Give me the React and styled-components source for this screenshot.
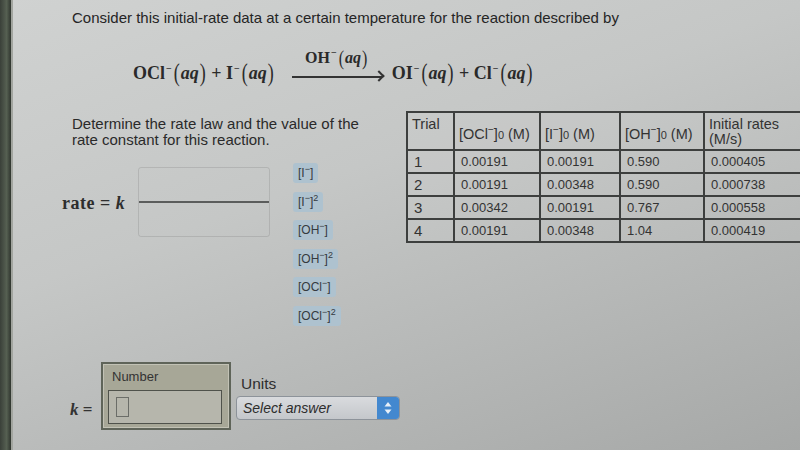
import styled, { createGlobalStyle } from "styled-components";

const GlobalStyle = createGlobalStyle`
  html, body {
    margin: 0;
    padding: 0;
    background: #b8bab9;
  }
  body {
    font-family: "Liberation Sans", Arial, sans-serif;
    color: #222;
  }
`;

const chips = [
  { base: "I", sq: false },
  { base: "I", sq: true },
  { base: "OH", sq: false },
  { base: "OH", sq: true },
  { base: "OCl", sq: false },
  { base: "OCl", sq: true },
];

const rows = [
  ["1", "0.00191", "0.00191", "0.590", "0.000405"],
  ["2", "0.00191", "0.00348", "0.590", "0.000738"],
  ["3", "0.00342", "0.00191", "0.767", "0.000558"],
  ["4", "0.00191", "0.00348", "1.04", "0.000419"],
];

function Aq() {
  return (
    <Aqueous>
      <Paren>(</Paren>aq<Paren>)</Paren>
    </Aqueous>
  );
}

function Species({ children }) {
  return (
    <>
      {children}
      <Minus>−</Minus>
      <Aq />
    </>
  );
}

export default function App() {
  return (
    <>
      <GlobalStyle />
      <Page>
        <Bezel />
        <Main>
          <Intro>
            Consider this initial-rate data at a certain temperature for the
            reaction described by
          </Intro>

          <Equation>
            <span>
              <Species>OCl</Species> + <Species>I</Species>
            </span>
            <Arrow>
              <Catalyst>
                <Species>OH</Species>
              </Catalyst>
              <ArrowLine />
            </Arrow>
            <span>
              <Species>OI</Species> + <Species>Cl</Species>
            </span>
          </Equation>

          <Middle>
            <LeftCol>
              <Prompt>
                Determine the rate law and the value of the
                <br />
                rate constant for this reaction.
              </Prompt>
              <RateArea>
                <RateLabel>
                  rate = <i>k</i>
                </RateLabel>
                <DropBox>
                  <DropLine />
                </DropBox>
                <ChipList>
                  {chips.map((c, i) => (
                    <Chip key={i}>
                      [{c.base}
                      <ChipSup>−</ChipSup>]{c.sq && <ChipSup>2</ChipSup>}
                    </Chip>
                  ))}
                </ChipList>
              </RateArea>
            </LeftCol>

            <DataTable>
              <thead>
                <tr>
                  <Th $w={47} $top>Trial</Th>
                  <Th $w={86}>
                    [OCl<sup>−</sup>]<Sub>0</Sub> (M)
                  </Th>
                  <Th $w={80}>
                    [I<sup>−</sup>]<Sub>0</Sub> (M)
                  </Th>
                  <Th $w={84}>
                    [OH<sup>−</sup>]<Sub>0</Sub> (M)
                  </Th>
                  <Th $w={110}>
                    Initial rates
                    <br />
                    (M/s)
                  </Th>
                </tr>
              </thead>
              <tbody>
                {rows.map((r) => (
                  <tr key={r[0]}>
                    {r.map((v, j) => (
                      <Td key={j} $trial={j === 0}>
                        {v}
                      </Td>
                    ))}
                  </tr>
                ))}
              </tbody>
            </DataTable>
          </Middle>

          <Bottom>
            <KLabel>
              <i>k</i> =
            </KLabel>
            <NumberBox>
              <FieldLabel>Number</FieldLabel>
              <NumberInput>
                <Caret />
              </NumberInput>
            </NumberBox>
            <UnitsCol>
              <UnitsLabel>Units</UnitsLabel>
              <Select>
                <SelectText>Select answer</SelectText>
                <Spinner>
                  <svg width="10" height="16" viewBox="0 0 10 16">
                    <path d="M5 2 L8.5 6.5 H1.5 Z" fill="#e8f0f8" />
                    <path d="M5 14 L8.5 9.5 H1.5 Z" fill="#e8f0f8" />
                  </svg>
                </Spinner>
              </Select>
            </UnitsCol>
          </Bottom>
        </Main>
      </Page>
    </>
  );
}

const Page = styled.div`
  width: 800px;
  height: 450px;
  overflow: hidden;
  display: flex;
  background: linear-gradient(160deg, #d0d2d1 0%, #c5c7c6 40%, #b3b5b4 75%, #a6a8a7 100%);
`;

const Bezel = styled.div`
  flex: 0 0 11px;
  background: linear-gradient(90deg, #3a4039 0%, #566052 60%, #2f352e 100%);
  border-right: 2px solid #a2a59f;
`;

const Main = styled.div`
  flex: 1;
  display: flex;
  flex-direction: column;
  min-width: 0;
`;

const Intro = styled.div`
  margin: 9px 0 0 59px;
  font-size: 15px;
  line-height: 17px;
  white-space: nowrap;
  color: #252525;
`;

const Equation = styled.div`
  display: flex;
  align-items: flex-end;
  margin: 10px 0 0 120px;
  height: 48px;
  font-family: "Liberation Serif", "Times New Roman", serif;
  font-weight: bold;
  font-size: 18px;
  color: #2a2a2a;
  white-space: nowrap;
  line-height: 22px;
`;

const Minus = styled.sup`
  font-size: 10px;
  vertical-align: 7px;
  margin: 0 1px;
`;

const Aqueous = styled.span`
  font-style: italic;
`;

const Paren = styled.span`
  display: inline-block;
  font-style: normal;
  font-weight: normal;
  transform: scaleY(1.35);
  margin: 0 1px;
`;

const Arrow = styled.span`
  display: inline-flex;
  flex-direction: column;
  align-items: center;
  width: 90px;
  margin: 0 10px 0 17px;
  position: relative;
  top: -6px;
`;

const Catalyst = styled.span`
  font-size: 16px;
  margin-bottom: 7px;
`;

const ArrowLine = styled.span`
  display: block;
  width: 90px;
  height: 2px;
  background: #333;
  position: relative;

  &::after {
    content: "";
    position: absolute;
    right: -1px;
    top: -4px;
    width: 8px;
    height: 8px;
    border-top: 2px solid #333;
    border-right: 2px solid #333;
    transform: rotate(45deg);
    box-sizing: border-box;
  }
`;

const Middle = styled.div`
  display: flex;
  margin-top: 27px;
`;

const LeftCol = styled.div`
  flex: 0 0 334px;
  margin-left: 59px;
`;

const Prompt = styled.div`
  margin-top: 5px;
  font-size: 15px;
  line-height: 16px;
  color: #2a2a2a;
  white-space: nowrap;
`;

const RateArea = styled.div`
  display: flex;
  align-items: flex-start;
  margin: 15px 0 0 -10px;
`;

const RateLabel = styled.div`
  flex: 0 0 76px;
  margin-top: 30px;
  font-family: "Liberation Serif", "Times New Roman", serif;
  font-weight: bold;
  font-size: 18px;
  letter-spacing: 0.5px;
  line-height: 20px;
  color: #2e2e2e;
  white-space: nowrap;
`;

const DropBox = styled.div`
  flex: 0 0 132px;
  height: 70px;
  margin-top: 4px;
  border: 1px solid rgba(120, 120, 120, 0.25);
  border-radius: 3px;
  display: flex;
  align-items: center;
  box-sizing: border-box;
`;

const DropLine = styled.div`
  width: 100%;
  height: 2px;
  background: #5b5d5c;
`;

const ChipList = styled.div`
  display: flex;
  flex-direction: column;
  align-items: flex-start;
  gap: 8.6px;
  margin-left: 23px;
`;

const Chip = styled.div`
  height: 20px;
  padding: 0 5px;
  display: flex;
  align-items: center;
  background: #aec2cf;
  border-radius: 3px;
  font-size: 12px;
  color: #353a3f;
  white-space: nowrap;
`;

const ChipSup = styled.span`
  font-size: 9px;
  position: relative;
  top: -4px;
`;

const DataTable = styled.table`
  border-collapse: collapse;
  border: 2px solid #383a39;
  height: 131px;
  flex: 0 0 auto;
  align-self: flex-start;
  background: rgba(255, 255, 255, 0.05);

  sup {
    font-size: 10px;
  }
`;

const Th = styled.th`
  width: ${(p) => p.$w}px;
  min-width: ${(p) => p.$w}px;
  height: 38px;
  box-sizing: border-box;
  border: 2px solid #3d3f3e;
  padding: ${(p) => (p.$top ? "4px 4px 0" : "2px 4px 0")};
  vertical-align: ${(p) => (p.$top ? "top" : "middle")};
  text-align: left;
  font-weight: normal;
  font-size: 14.5px;
  line-height: 15px;
  color: #333;
  white-space: nowrap;
`;

const Sub = styled.span`
  font-size: 11px;
  position: relative;
  top: 1px;
`;

const Td = styled.td`
  height: 23px;
  box-sizing: border-box;
  border: 2px solid #3d3f3e;
  padding: 0 6px;
  font-size: ${(p) => (p.$trial ? "15px" : "13px")};
  color: #333;
  white-space: nowrap;
`;

const Bottom = styled.div`
  display: flex;
  align-items: flex-start;
  margin-top: 36px;
  margin-left: 57px;
`;

const KLabel = styled.div`
  flex: 0 0 31px;
  margin-top: 38px;
  font-family: "Liberation Serif", "Times New Roman", serif;
  font-weight: bold;
  font-size: 17px;
  color: #333;
  white-space: nowrap;
`;

const NumberBox = styled.div`
  width: 130px;
  height: 68px;
  box-sizing: border-box;
  background: #a7a797;
  border: 2px solid #5f6459;
  box-shadow: inset 0 0 0 1px #c2c2b5;
  padding: 6px 7px 0 5px;
`;

const FieldLabel = styled.div`
  font-size: 13px;
  line-height: 14px;
  margin-left: 4px;
  color: #333;
`;

const NumberInput = styled.div`
  margin-top: 6px;
  height: 34px;
  box-sizing: border-box;
  border: 1px solid #4f524b;
  background: #b6b6ac;
  padding: 6px 7px;
`;

const Caret = styled.div`
  width: 13px;
  height: 20px;
  box-sizing: border-box;
  border: 1px solid #6b6d68;
`;

const UnitsCol = styled.div`
  margin: 14px 0 0 5px;
`;

const UnitsLabel = styled.div`
  margin-left: 5px;
  font-size: 15.5px;
  line-height: 16px;
  color: #2e2e2e;
`;

const Select = styled.div`
  margin-top: 4px;
  width: 164px;
  height: 24px;
  box-sizing: border-box;
  display: flex;
  border: 1px solid #8d939a;
  border-radius: 4px;
  overflow: hidden;
  background: linear-gradient(180deg, #d9dbde 0%, #c4c7cb 100%);
`;

const SelectText = styled.div`
  flex: 1;
  padding-left: 6px;
  font-size: 14px;
  font-style: italic;
  line-height: 22px;
  color: #2c2c2c;
`;

const Spinner = styled.div`
  flex: 0 0 22px;
  display: flex;
  align-items: center;
  justify-content: center;
  background: #4388cf;
`;
